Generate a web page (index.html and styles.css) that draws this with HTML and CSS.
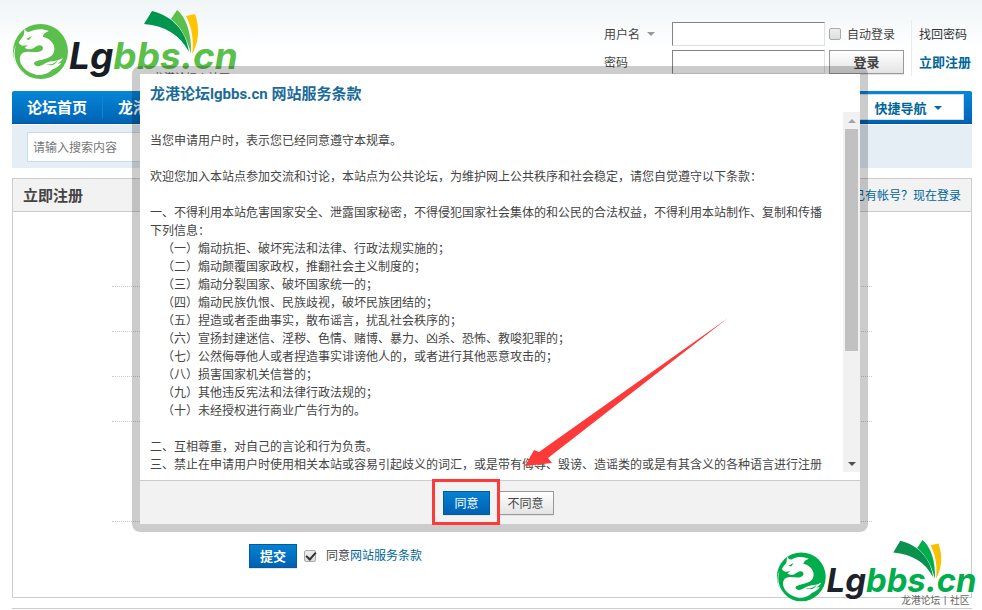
FILE: index.html
```html
<!DOCTYPE html>
<html lang="zh-CN">
<head>
    <meta charset="UTF-8">
    <meta name="viewport" content="width=device-width, initial-scale=1.0">
    <title>立即注册</title>
    <link rel="stylesheet" href="styles.css">
</head>
<body>
    <div class="wp">
        <div class="header">
            <a href="#" class="logo" aria-label="龙港论坛">
                <svg viewBox="0 0 232 84">
                    <!-- also used in the corner -->
                    <g id="logo">
                        <circle class="c-main" cx="28.5" cy="43.5" r="27.5"/>
                        <g transform="translate(-4 12) scale(.3333)" fill="#fff">
                            <path d="M50 26C54 36 60 38 68 34C84 26 104 26 123 33C111 37 107 42 104 50C130 56 144 76 138 96C132 114 108 118 94 121C78 124 72 133 86 138C100 142 108 128 130 124C140 122 152 122 165 114C160 124 154 128 148 131L160 129C152 140 142 146 134 148C120 162 102 168 84 164C50 156 28 128 38 106C46 90 66 96 84 97C102 96 110 86 102 78C94 72 84 79 76 85C66 90 58 88 50 83L60 76L44 77C38 76 34 72 32 68C36 58 44 54 47 46C49 40 48 32 50 26Z"/>
                            <path d="M24 76C12 108 26 144 54 164C32 152 16 128 17 100C18 90 20 82 24 76Z"/>
                        </g>
                        <path class="c-main" d="M14 31L20 28L17 32ZM33 56Q40 58 46 52Q42 60 33 56Z"/>
                        <path class="c-dark" d="M140 3C160 8 174 22 177 44C168 27 154 18 132 16Z"/>
                        <path class="c-main" d="M165 2C174 9 180 26 179 46C175 30 169 19 159 11Z"/>
                        <path class="c-gold" d="M174 8L183 6C188 20 187 34 180 46C182 32 180 20 174 8Z"/>
                        <text class="logo-text" x="57" y="61"><tspan class="c-ink">Lg</tspan><tspan class="c-main">bbs.cn</tspan></text>
                        <text class="logo-sub" x="141" y="74">龙港论坛丨社区</text>
                    </g>
                </svg>
            </a>
            <form class="login">
                <div class="login-grid">
                    <label for="username">用户名 <i class="arrow"></i></label>
                    <input type="text" id="username" class="px">
                    <div class="auto"><input type="checkbox" id="auto" class="check"><label for="auto">自动登录</label></div>
                    <label for="password">密码</label>
                    <input type="password" id="password" class="px">
                    <button type="button" class="btn btn-login">登录</button>
                </div>
                <div class="login-links">
                    <a href="#">找回密码</a>
                    <a href="#" class="reg">立即注册</a>
                </div>
            </form>
        </div>

        <div class="nav">
            <a href="#">论坛首页</a>
            <a href="#">龙港</a>
            <button type="button" class="quick">快捷导航 <i class="arrow"></i></button>
        </div>
        <div class="search">
            <input type="text" aria-label="搜索" placeholder="请输入搜索内容">
        </div>

        <div class="register">
            <div class="register-head">
                <h1>立即注册</h1>
                <a href="#">已有帐号？现在登录</a>
            </div>
            <div class="fields">
                <div class="row first"></div>
                <div class="row"></div>
                <div class="row"></div>
                <div class="row"></div>
                <div class="row last"></div>
            </div>
            <div class="submit">
                <button type="button" class="btn btn-blue btn-submit">提交</button>
                <input type="checkbox" id="agree" class="check" checked>
                <label for="agree">同意<a href="#">网站服务条款</a></label>
            </div>
        </div>
        <div class="footer"></div>
    </div>

    <div class="dialog" role="dialog" aria-labelledby="rules">
        <div class="dialog-body">
            <h2 id="rules">龙港论坛lgbbs.cn 网站服务条款</h2>
            <div class="scroll">
                <div class="terms">
                    <p>当您申请用户时，表示您已经同意遵守本规章。</p>
                    <p>欢迎您加入本站点参加交流和讨论，本站点为公共论坛，为维护网上公共秩序和社会稳定，请您自觉遵守以下条款：</p>
                    <p class="tight">一、不得利用本站危害国家安全、泄露国家秘密，不得侵犯国家社会集体的和公民的合法权益，不得利用本站制作、复制和传播下列信息：</p>
                    <ul>
                        <li>（一）煽动抗拒、破坏宪法和法律、行政法规实施的；</li>
                        <li>（二）煽动颠覆国家政权，推翻社会主义制度的；</li>
                        <li>（三）煽动分裂国家、破坏国家统一的；</li>
                        <li>（四）煽动民族仇恨、民族歧视，破坏民族团结的；</li>
                        <li>（五）捏造或者歪曲事实，散布谣言，扰乱社会秩序的；</li>
                        <li>（六）宣扬封建迷信、淫秽、色情、赌博、暴力、凶杀、恐怖、教唆犯罪的；</li>
                        <li>（七）公然侮辱他人或者捏造事实诽谤他人的，或者进行其他恶意攻击的；</li>
                        <li>（八）损害国家机关信誉的；</li>
                        <li>（九）其他违反宪法和法律行政法规的；</li>
                        <li>（十）未经授权进行商业广告行为的。</li>
                    </ul>
                    <p class="tight">二、互相尊重，对自己的言论和行为负责。</p>
                    <p class="tight">三、禁止在申请用户时使用相关本站或容易引起歧义的词汇，或是带有侮辱、毁谤、造谣类的或是有其含义的各种语言进行注册</p>
                </div>
                <div class="bar">
                    <span class="bar-up"></span>
                    <span class="thumb"></span>
                    <span class="bar-down"></span>
                </div>
            </div>
            <div class="dialog-foot">
                <button type="button" class="btn btn-blue">同意</button>
                <button type="button" class="btn">不同意</button>
            </div>
            <svg class="mark" width="300" height="212" viewBox="0 0 300 212" aria-hidden="true">
                <rect x="3.500" y="164.500" width="65" height="43" fill="none" stroke="#fd3a3a" stroke-width="3"/>
                <path d="M298 2L109 136L104 134L95 150L122 147L118 142Z" fill="#fd3a3a"/>
            </svg>
        </div>
    </div>

    <div class="corner"><svg viewBox="0 0 232 84"><use href="#logo"/></svg></div>
</body>
</html>
```
FILE: styles.css
```css
*{
    margin: 0;
    padding: 0;
    box-sizing: border-box;
}

body{
    position: relative;
    font: 12px/18px "Liberation Sans", "Noto Sans CJK SC", sans-serif;
    color: #444;
    background: #fff linear-gradient(#f0f5f8, #fff 50px) no-repeat;
}

a{
    color: #069;
    text-decoration: none;
}

input, button{
    font: inherit;
    color: inherit;
}

.wp{
    margin: 0 10px 0 12px;
}

/* header */
.header{
    display: flex;
    justify-content: space-between;
    align-items: flex-start;
    height: 91px;
}

.logo{
    margin-top: 8px;
    --main: #5bbf4c;
    --dark: #00954f;
    --gold: #ffc400;
    --ink: #161d25;
}

.logo svg{
    display: block;
    width: 232px;
    height: 84px;
    overflow: visible;
}

.c-main{ fill: var(--main); }
.c-dark{ fill: var(--dark); }
.c-gold{ fill: var(--gold); }
.c-ink{ fill: var(--ink); }

.logo-text{
    font: italic bold 37px Inter, sans-serif;
}

.logo-sub{
    font: 11px "Noto Sans CJK SC", sans-serif;
    fill: #666;
}

.login{
    display: flex;
    margin-top: 20px;
}

.login-grid{
    display: grid;
    grid-template-columns: 64px 153px 75px;
    grid-template-rows: 24px 24px;
    gap: 4px;
    align-items: center;
    padding: 2px 7px 0 0;
}

.px{
    width: 100%;
    height: 24px;
    border: 1px solid;
    border-color: #848484 #e0e0e0 #e0e0e0 #848484;
    background: #fff;
}

.login-grid label{
    padding-top: 2px;
}

.arrow{
    display: inline-block;
    margin: 0 0 3px 4px;
    border: 4px solid transparent;
    border-top-color: #999;
    border-bottom: 0;
}

.auto{
    display: flex;
    align-items: center;
    gap: 6px;
}

.check{
    appearance: none;
    width: 12px;
    height: 12px;
    border: 1px solid #aaa;
    border-radius: 2px;
    background: linear-gradient(#eee, #ddd);
}

.check:checked::after{
    content: "";
    display: block;
    width: 8px;
    height: 4px;
    margin: 1px;
    border: solid #333;
    border-width: 0 0 2px 2px;
    transform: rotate(-48deg);
}

.login-links{
    display: flex;
    flex-direction: column;
    gap: 10px;
    width: 61px;
    height: 56px;
    padding: 6px 0 0 7px;
    border-left: 1px solid #e5edf2;
    white-space: nowrap;
}

.login-links a{
    color: #333;
}

.login-links .reg{
    color: #069;
    font-size: 13px;
    font-weight: bold;
}

.btn{
    height: 24px;
    padding: 1px 9px 0;
    border: 1px solid #999;
    background: linear-gradient(#fff, #e4e4e4);
    line-height: 20px;
    box-shadow: 0 1px 0 #e5e5e5;
}

.btn-login{
    font-size: 13px;
    font-weight: bold;
}

.btn-blue{
    padding: 1px 10px 0;
    border-color: #005c9c;
    background: linear-gradient(#0681d1, #0061b2);
    color: #fff;
}

/* nav */
.nav{
    display: flex;
    align-items: center;
    height: 33px;
    padding-right: 8px;
    border-radius: 2px 2px 0 0;
    border-bottom: 1px solid #005a9e;
    background: linear-gradient(#0686d8, #0063b4);
}

.nav a{
    padding: 2px 15px 0;
    color: #fff;
    font-size: 15px;
    font-weight: bold;
    line-height: 20px;
    border-right: 1px solid #0f86d3;
}

.quick{
    height: 26px;
    margin-left: auto;
    padding: 3px 21px 0;
    border: 1px solid #cde;
    background: #fff;
    color: #069;
    font-size: 13px;
    font-weight: bold;
}

.quick .arrow{
    border-top-color: #06b;
}

.search{
    height: 43px;
    margin: 1px 0 10px;
    padding: 7px 15px;
    background: #e5edf5;
}

.search input{
    width: 420px;
    height: 30px;
    padding: 2px 5px 0;
    border: 1px solid #c8dde5;
}

.search input::placeholder{
    color: #777;
}

/* register panel */
.register{
    border: 1px solid #ccc;
}

.register-head{
    display: flex;
    justify-content: space-between;
    align-items: center;
    height: 33px;
    padding: 2px 10px 0;
    border-bottom: 1px solid #ccc;
    background: #f2f2f2;
}

.register-head h1{
    font-size: 15px;
    line-height: 20px;
}

.fields{
    padding: 0 99px;
}

.row{
    height: 45px;
    border-bottom: 1px dotted #ccc;
}

.row.first{
    height: 75px;
}

.row.last{
    height: 100px;
}

.submit{
    display: flex;
    align-items: center;
    gap: 7px;
    padding: 22px 236px 29px;
}

.submit label{
    margin-left: 3px;
}

.btn-submit{
    font-size: 13px;
    font-weight: bold;
}

.footer{
    margin-top: 10px;
    border-top: 1px solid #ccc;
}

/* terms dialog */
.dialog{
    position: absolute;
    top: 66px;
    left: 132px;
    right: 114px;
    padding: 8px;
    border-radius: 8px;
    background: rgba(0, 0, 0, 0.2);
}

.dialog-body{
    position: relative;
    background: #fff;
}

.dialog h2{
    padding: 10px 10px 8px;
    color: #1a6a9a;
    font: bold 15px/20px Roboto, "Noto Sans CJK SC", sans-serif;
}

.scroll{
    display: flex;
    height: 360px;
    margin: 0 0 8px;
}

.terms{
    flex: 1;
    padding: 20px 10px 0;
    overflow: hidden;
}

.terms p, .terms ul{
    margin-bottom: 18px;
}

.terms .tight{
    margin-bottom: 0;
}

.terms ul{
    padding-left: 12px;
    list-style: none;
}

.bar{
    display: flex;
    flex-direction: column;
    align-items: center;
    width: 17px;
    background: #f1f1f1;
}

.bar-up, .bar-down{
    display: flex;
    align-items: center;
    justify-content: center;
    height: 17px;
}

.bar-up::after, .bar-down::after{
    content: "";
    border: 4px solid transparent;
}

.bar-up::after{
    border-top: 0;
    border-bottom-color: #a3a3a3;
}

.bar-down::after{
    border-bottom: 0;
    border-top-color: #505050;
}

.thumb{
    width: 13px;
    height: 222px;
    margin-bottom: auto;
    background: #c1c1c1;
}

.dialog-foot{
    display: flex;
    justify-content: center;
    gap: 8px;
    padding: 10px 3px 9px 0;
    border-top: 1px solid #ccc;
    background: #f2f2f2;
}

.mark{
    position: absolute;
    left: 50%;
    top: 242px;
    margin-left: -70px;
    pointer-events: none;
}

/* corner logo */
.corner{
    position: absolute;
    right: 0;
    top: 538px;
    --main: #00ad4c;
    --dark: #0a914e;
    --gold: #f7c100;
    --ink: #1c232b;
}

.corner svg{
    display: block;
    width: 206px;
    height: 75px;
    overflow: visible;
}
```
